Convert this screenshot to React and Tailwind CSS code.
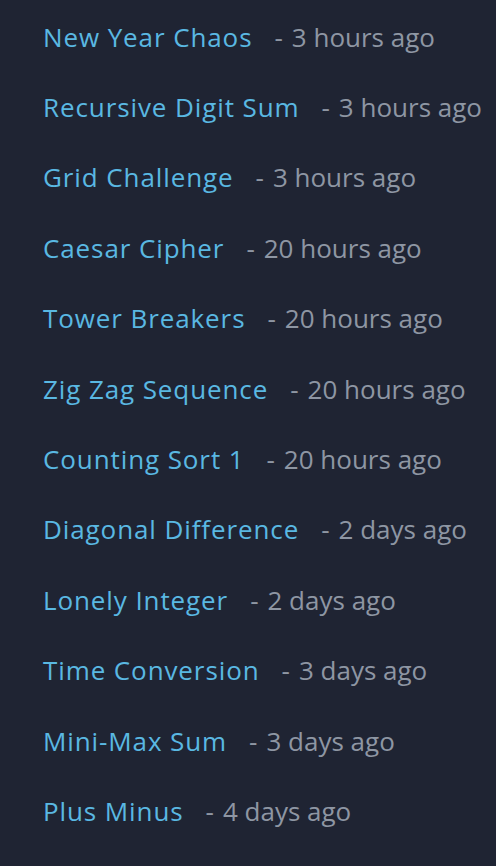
const items = [
  ["New Year Chaos", "3 hours ago"],
  ["Recursive Digit Sum", "3 hours ago"],
  ["Grid Challenge", "3 hours ago"],
  ["Caesar Cipher", "20 hours ago"],
  ["Tower Breakers", "20 hours ago"],
  ["Zig Zag Sequence", "20 hours ago"],
  ["Counting Sort 1", "20 hours ago"],
  ["Diagonal Difference", "2 days ago"],
  ["Lonely Integer", "2 days ago"],
  ["Time Conversion", "3 days ago"],
  ["Mini-Max Sum", "3 days ago"],
  ["Plus Minus", "4 days ago"],
];

export default function App() {
  return (
    <div
      className="w-[496px] h-[866px] bg-[#1f2433] overflow-hidden pt-[2px] pl-[43px]"
      style={{ fontFamily: '"Open Sans", sans-serif' }}
    >
      <ul>
        {items.map(([title, ago]) => (
          <li key={title} className="h-[70.4px] flex items-center whitespace-nowrap text-[26px]">
            <a className="text-[#5ab8e2] tracking-[0.9px]">{title}</a>
            <span className="ml-[22px] text-[#8e96a3]">-</span>
            <span className="ml-[9px] text-[#8e96a3]">{ago}</span>
          </li>
        ))}
      </ul>
    </div>
  );
}
